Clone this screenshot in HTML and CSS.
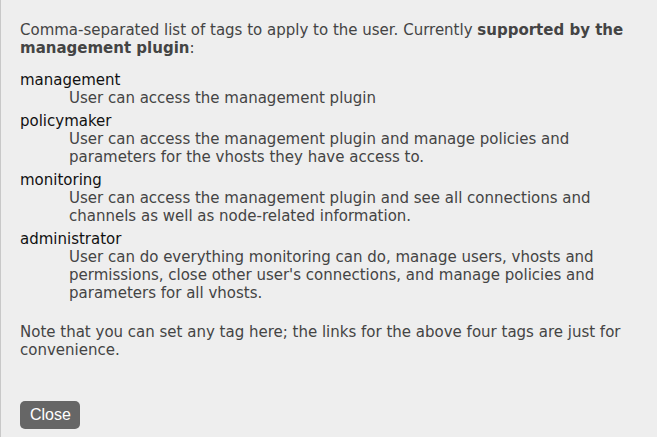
FILE: index.html
```html
<!DOCTYPE html>
<html>
<head>
<meta charset="utf-8">
<link rel="stylesheet" href="styles.css">
</head>
<body>
<div class="help">
  <p class="intro">Comma-separated list of tags to apply to the user. Currently <b>supported by the</b> <b>management plugin</b>:</p>
  <dl class="tags">
    <dt>management</dt>
    <dd>User can access the management plugin</dd>
    <dt>policymaker</dt>
    <dd>User can access the management plugin and manage policies and parameters for the vhosts they have access to.</dd>
    <dt>monitoring</dt>
    <dd>User can access the management plugin and see all connections and channels as well as node-related information.</dd>
    <dt>administrator</dt>
    <dd>User can do everything monitoring can do, manage users, vhosts and permissions, close other user's connections, and manage policies and parameters for all vhosts.</dd>
  </dl>
  <p class="note">Note that you can set any tag here; the links for the above four tags are just for convenience.</p>
  <button class="close">Close</button>
</div>
</body>
</html>
```
FILE: styles.css
```css
html, body {
  margin: 0;
  padding: 0;
  background: #eeeeee;
}
body {
  font-family: "DejaVu Sans", Verdana, sans-serif;
  font-size: 15px;
  line-height: 18px;
  color: #444444;
}
.help {
  box-sizing: border-box;
  width: 657px;
  height: 437px;
  border-left: 1px solid #c8c8c8;
  padding: 21px 19px 0 19px;
  display: flex;
  flex-direction: column;
  align-items: flex-start;
}
.intro {
  margin: 0 0 14px 0;
}
.intro b {
  color: #444444;
}
.tags {
  margin: 0 0 16px 0;
}
.tags dt {
  color: #111111;
  margin: 0;
}
.tags dd {
  margin: 0 0 5px 49px;
}
.note {
  margin: 0;
}
.close {
  margin-top: 42px;
  background: #666666;
  color: #ffffff;
  border: none;
  border-radius: 5px;
  font-family: "Liberation Sans", Arial, sans-serif;
  font-size: 16px;
  line-height: 18px;
  padding: 5px 10px;
  height: 28px;
  width: 60px;
}
```
